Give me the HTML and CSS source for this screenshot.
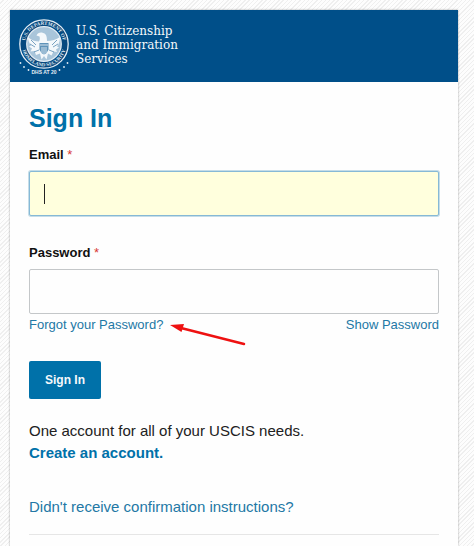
FILE: index.html
```
<!DOCTYPE html>
<html lang="en">

<head>
	<meta charset="UTF-8">
	<meta name="viewport" content="width=device-width,initial-scale=1">
	<title>Sign In</title>
	<link rel="stylesheet" href="styles.css">
</head>

<body>
	<div class="card">
		<header class="header">
			<svg class="seal" viewBox="0 0 52 58" aria-hidden="true">
				<defs>
					<path id="arcTop" d="M6.800 26a19.200 19.200 0 1 1 38.400 0" />
					<path id="arcBottom" d="M3.700 26a22.300 22.300 0 0 0 44.600 0" />
				</defs>
				<circle cx="26" cy="26" r="24.2" fill="#06497f" stroke="#e4edf4" stroke-width="1.3" />
				<circle cx="26" cy="26" r="17.3" fill="#a9c5da" stroke="#e4edf4" stroke-width="1.2" />
				<g class="seal-text">
					<text><textPath href="#arcTop" startOffset="50%" text-anchor="middle">U.S. DEPARTMENT OF</textPath></text>
					<text><textPath href="#arcBottom" startOffset="50%" text-anchor="middle">HOMELAND SECURITY</textPath></text>
				</g>
				<path fill="#f4f8fb" d="M10 19c3 3 7 4.500 11 4.500 1-1.500 1-3.500.5-5l-3-1c1-2.500 4-3.500 6.500-2.500 3 .5 4 3 4 8 5 0 9-1.500 13-4 0 4-1 7-3 9.500l2 1-3 2 1 2.500-3.500-.5-2 4-3.500-2-1.500 6-2.500-3.500-2.500 3.500-1.500-6-4 1.500-1.500-4-4 .5 1.500-3-3-2 2-1c-2-2.500-3-5.500-3-8.500z" />
				<path fill="#5f93b9" d="M21.500 25h9v6.500q-1 3.500-4.500 5-3.500-1.500-4.500-5z" />
				<path stroke="#f4f8fb" fill="none" d="M22 27h8M24 29v6M26 29v7M28 29v6" stroke-width=".8" />
				<path stroke="#447da8" fill="none" stroke-width=".7" d="M13 22l5 5M12 26l5 3M39 22l-5 5M40 26l-5 3M16 34l5-2M36 34l-5-2" />
				<g fill="#e4edf4">
					<circle cx="2.500" cy="45" r=".9" />
					<circle cx="6" cy="49" r=".9" />
					<circle cx="10.500" cy="52" r=".9" />
					<circle cx="41.500" cy="52" r=".9" />
					<circle cx="46" cy="49" r=".9" />
					<circle cx="49.500" cy="45" r=".9" />
				</g>
				<text class="seal-motto" x="26" y="56" text-anchor="middle">DHS AT 20</text>
			</svg>
			<div class="agency">U.S. Citizenship<br>and Immigration<br>Services</div>
		</header>
		<main class="content">
			<h1 class="title">Sign In</h1>
			<form class="form">
				<div class="field">
					<label class="label" for="email">Email <span class="required">*</span></label>
					<input class="input input-active" type="email" id="email" name="email">
				</div>
				<div class="field">
					<label class="label" for="password">Password <span class="required">*</span></label>
					<input class="input" type="password" id="password" name="password">
					<div class="field-links">
						<span class="forgot">
							<a class="link" href="#">Forgot your Password?</a>
							<svg class="arrow" viewBox="0 0 78 24" aria-hidden="true">
								<path d="M12 5l63 16" stroke="#ee1111" stroke-width="2.500" stroke-linecap="round" />
								<path d="M1 2l14-1-2.500 8z" fill="#ee1111" />
							</svg>
						</span>
						<a class="link" href="#">Show Password</a>
					</div>
				</div>
				<button class="button" type="submit">Sign In</button>
			</form>
			<p class="note">One account for all of your USCIS needs.<br><a class="link create" href="#">Create an account.</a></p>
			<p class="note"><a class="link" href="#">Didn't receive confirmation instructions?</a></p>
			<hr class="divider">
		</main>
	</div>
</body>

</html>
```
FILE: styles.css
```
:root {
	--primary: #0071a9;
	--link: #2378a5;
	--header: #004f89;
}

* {
	box-sizing: border-box;
}

body {
	font-family: "Liberation Sans", Arial, sans-serif;
	font-size: 15px;
	color: #212121;
	margin: 0;
	padding: 10px 16px 0 10px;
	background: repeating-linear-gradient(135deg, #fdfdfd 0, #fdfdfd 2px, #efefef 2px, #efefef 3px);
}

.card {
	min-height: calc(100vh - 10px);
	background: #fefefe;
	box-shadow: 0 0 2px rgba(0, 0, 0, 0.35);
}

.header {
	display: flex;
	gap: 6px;
	padding: 8px 8px 6px;
	background: var(--header);
}

.seal {
	width: 52px;
	height: 58px;
}

.seal-text {
	font-family: "Liberation Serif", serif;
	font-size: 5px;
	font-weight: bold;
	fill: #e4edf4;
}

.seal-motto {
	font-size: 5px;
	font-weight: bold;
	fill: #e4edf4;
}

.agency {
	padding-top: 6px;
	font-family: "DejaVu Serif", serif;
	font-size: 12px;
	line-height: 14px;
	color: #f4f8fb;
}

.content {
	padding: 20px 19px 0;
}

.title {
	margin: 0 0 12px;
	font-size: 25px;
	line-height: 32px;
	color: var(--primary);
}

.field {
	margin-bottom: 28px;
}

.label {
	display: block;
	margin-bottom: 8px;
	font-size: 13px;
	font-weight: bold;
	line-height: 17px;
	color: #111;
}

.required {
	font-weight: normal;
	color: #d83933;
}

.input {
	display: block;
	width: 100%;
	height: 45px;
	padding: 10px 15px;
	border: 1px solid #c4c7c9;
	border-radius: 2px;
	background: #fefefe;
	font: inherit;
	outline: none;
}

/* focused state, with its text cursor */
.input-active {
	border-color: #86b9d6;
	box-shadow: 0 0 0 1px #c5dde8;
	background: linear-gradient(#222, #222) 14px center / 1px 20px no-repeat #ffffdd;
}

.field-links {
	display: flex;
	justify-content: space-between;
	padding-top: 2px;
	font-size: 13px;
	line-height: 17px;
}

.forgot {
	position: relative;
}

/* pointer beside the forgot link */
.arrow {
	position: absolute;
	top: 7px;
	left: calc(100% + 6px);
	width: 78px;
	height: 24px;
}

.link {
	color: var(--link);
	text-decoration: none;
}

.link:hover {
	text-decoration: underline;
}

.button {
	display: block;
	padding: 11px 16px;
	border: 0;
	border-radius: 2px;
	background: var(--primary);
	color: #f4f8fb;
	font-family: inherit;
	font-size: 12px;
	font-weight: bold;
	line-height: 16px;
	cursor: pointer;
}

.note {
	margin: 21px 0 32px;
	line-height: 22px;
}

.note:last-of-type {
	margin-bottom: 16px;
}

.create {
	font-weight: bold;
	color: var(--primary);
}

.divider {
	margin: 0;
	border: 0;
	border-top: 1px solid #e6e6e6;
}
```
